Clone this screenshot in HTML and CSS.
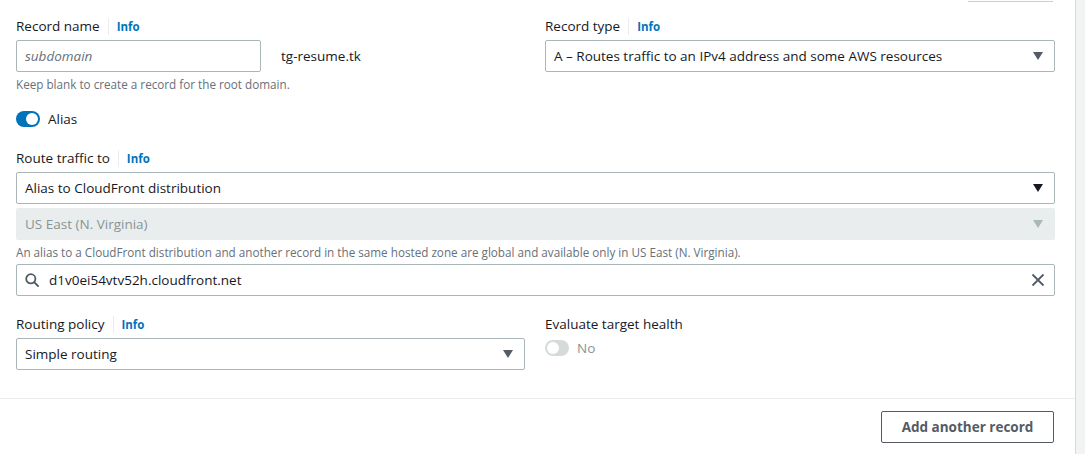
FILE: index.html
```html
<!DOCTYPE html>
<html>
<head>
<meta charset="utf-8">
<link rel="stylesheet" href="styles.css">
</head>
<body>
<div class="card">
  <div class="prev-row"><span class="prev-btn"></span></div>
  <div class="content">
    <div class="grid2">
      <div class="field">
        <div class="label-row"><span class="label">Record name</span><span class="sep"></span><a class="info">Info</a></div>
        <div class="name-row">
          <div class="input name-input"><span class="placeholder">subdomain</span></div>
          <span class="domain">tg-resume.tk</span>
        </div>
        <div class="hint">Keep blank to create a record for the root domain.</div>
      </div>
      <div class="field">
        <div class="label-row"><span class="label">Record type</span><span class="sep"></span><a class="info">Info</a></div>
        <div class="input select"><span class="value">A – Routes traffic to an IPv4 address and some AWS resources</span><span class="caret"></span></div>
      </div>
    </div>

    <div class="toggle-row alias-row">
      <span class="toggle on"><span class="knob"></span></span>
      <span class="toggle-label">Alias</span>
    </div>

    <div class="field route">
      <div class="label-row"><span class="label">Route traffic to</span><span class="sep"></span><a class="info">Info</a></div>
      <div class="input select"><span class="value">Alias to CloudFront distribution</span><span class="caret dark"></span></div>
      <div class="input select disabled"><span class="value">US East (N. Virginia)</span><span class="caret light"></span></div>
      <div class="hint tight">An alias to a CloudFront distribution and another record in the same hosted zone are global and available only in US East (N. Virginia).</div>
      <div class="input search">
        <svg class="icon" width="14" height="14" viewBox="0 0 14 14"><circle cx="5.8" cy="5.8" r="4.6" fill="none" stroke="#545b64" stroke-width="1.8"/><line x1="9.2" y1="9.2" x2="13" y2="13" stroke="#545b64" stroke-width="1.8" stroke-linecap="round"/></svg>
        <span class="value">d1v0ei54vtv52h.cloudfront.net</span>
        <svg class="clear" width="14" height="14" viewBox="0 0 14 14"><path d="M1.5 1.5 L12.5 12.5 M12.5 1.5 L1.5 12.5" stroke="#545b64" stroke-width="1.8" fill="none"/></svg>
      </div>
    </div>

    <div class="grid2 routing">
      <div class="field">
        <div class="label-row"><span class="label">Routing policy</span><span class="sep"></span><a class="info">Info</a></div>
        <div class="input select"><span class="value">Simple routing</span><span class="caret"></span></div>
      </div>
      <div class="field">
        <div class="label-row"><span class="label">Evaluate target health</span></div>
        <div class="toggle-row eval-row">
          <span class="toggle off"><span class="knob"></span></span>
          <span class="toggle-label muted">No</span>
        </div>
      </div>
    </div>
  </div>
  <div class="divider"></div>
  <div class="footer">
    <button class="btn">Add another record</button>
  </div>
</div>
</body>
</html>
```

FILE: styles.css
```css
html, body {
  margin: 0;
  padding: 0;
  background: #f2f3f3;
  height: 100%;
}
body {
  font-family: "Open Sans", "Noto Sans", sans-serif;
  font-size: 13.5px;
  color: #16191f;
  overflow: hidden;
}
.card {
  width: 1075px;
  height: 100%;
  background: #ffffff;
  border-right: 1px solid #d5dbdb;
  box-sizing: content-box;
}
.prev-row {
  display: flex;
  justify-content: flex-end;
  padding-right: 22px;
  height: 0;
}
.prev-btn {
  width: 85px;
  height: 1px;
  border-bottom: 1px solid #c8cfd0;
}
.content {
  padding: 15px 20px 0 16px;
}
.grid2 {
  display: grid;
  grid-template-columns: 509px 510px;
  column-gap: 20px;
}
.label-row {
  display: flex;
  align-items: center;
  height: 22px;
  margin-bottom: 3px;
}
.label {
  line-height: 22px;
}
.sep {
  width: 1px;
  height: 17px;
  background: #eaeded;
  margin: 0 8px 0 8px;
}
.info {
  color: #0073bb;
  font-weight: 700;
  font-size: 11.5px;
}
.input {
  height: 32px;
  box-sizing: border-box;
  border: 1px solid #aab7b8;
  border-radius: 2px;
  display: flex;
  align-items: center;
  padding: 0 8px;
  background: #fff;
}
.name-row {
  display: flex;
  align-items: center;
}
.name-input {
  width: 245px;
}
.placeholder {
  font-style: italic;
  color: #687078;
}
.domain {
  margin-left: 20px;
}
.hint {
  font-size: 11.7px;
  line-height: 16px;
  color: #687078;
  margin-top: 4px;
}
.hint.tight {
  margin-bottom: 4px;
}
.select {
  justify-content: space-between;
}
.caret {
  width: 0;
  height: 0;
  border-left: 5px solid transparent;
  border-right: 5px solid transparent;
  border-top: 8px solid #545b64;
  margin-right: 3px;
}
.caret.dark {
  border-top-color: #16191f;
}
.caret.light {
  border-top-color: #aab7b8;
}
.select.disabled {
  background: #eaeded;
  border-color: #eaeded;
  color: #879596;
  margin-top: 4px;
}
.search .icon {
  margin-right: 10px;
  flex: none;
}
.search .value {
  flex: 1;
}
.search .clear {
  margin-right: 1px;
}
.toggle-row {
  display: flex;
  align-items: center;
  height: 20px;
}
.alias-row {
  margin-top: 17px;
}
.toggle {
  width: 24px;
  height: 16px;
  border-radius: 8px;
  box-sizing: border-box;
  padding: 2px;
  display: flex;
  margin-right: 8px;
}
.toggle .knob {
  width: 12px;
  height: 12px;
  border-radius: 50%;
  background: #fff;
}
.toggle.on {
  background: #0073bb;
  justify-content: flex-end;
}
.toggle.off {
  background: #d5dbdb;
  justify-content: flex-start;
}
.muted {
  color: #879596;
}
.route {
  margin-top: 18px;
}
.routing {
  margin-top: 17px;
}
.eval-row {
  margin-top: 2px;
}
.divider {
  height: 1px;
  background: #eaeded;
  margin-top: 28px;
}
.footer {
  display: flex;
  justify-content: flex-end;
  padding: 12px 21px 0 0;
}
.btn {
  height: 32px;
  width: 173px;
  box-sizing: border-box;
  border: 1px solid #545b64;
  border-radius: 2px;
  background: #fff;
  color: #545b64;
  font-family: "Open Sans", "Noto Sans", sans-serif;
  font-weight: 700;
  font-size: 13.5px;
  padding: 0;
}
```
